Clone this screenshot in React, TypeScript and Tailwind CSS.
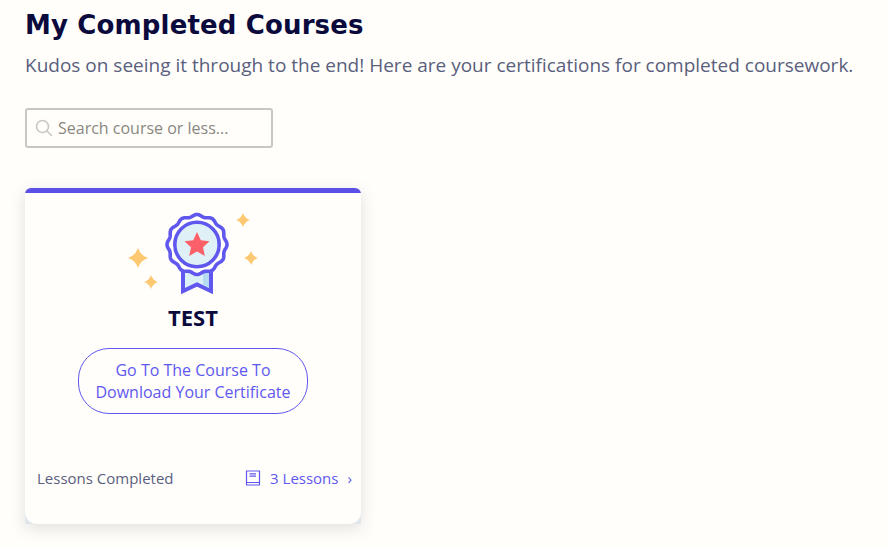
const scallop = (() => {
  const cx = 197, cy = 244.5, n = 12, R = 29, A = 1;
  let d = "";
  for (let i = 0; i <= 240; i++) {
    const t = (i / 240) * Math.PI * 2;
    const r = R + A * Math.cos(n * t);
    d += `${i ? "L" : "M"}${(cx + r * Math.sin(t)).toFixed(2)} ${(cy - r * Math.cos(t)).toFixed(2)}`;
  }
  return d + "Z";
})();

const sparkle = (x: number, y: number, r: number) =>
  `M${x} ${y - r}Q${x + r * 0.25} ${y - r * 0.25} ${x + r} ${y}Q${x + r * 0.25} ${y + r * 0.25} ${x} ${y + r}Q${x - r * 0.25} ${y + r * 0.25} ${x - r} ${y}Q${x - r * 0.25} ${y - r * 0.25} ${x} ${y - r}Z`;

function Badge() {
  return (
    <svg width="140" height="90" viewBox="125 207 140 90" className="block">
      <path d="M183 268V291L197 284.5L211 291V268Z" fill="#dcf0f8" stroke="#6058ee" strokeWidth="4" strokeLinejoin="miter" />
      <path d="M203 272H209V288L203 285Z" fill="#b5dcf2" />
      <path d={scallop} fill="#fffefb" stroke="#6058ee" strokeWidth="3.6" />
      <circle cx="197" cy="244.5" r="22.2" fill="#dff0f7" stroke="#6058ee" strokeWidth="3.6" />
      <path d="M197 232L200.8 240.2L209.5 241.2L203 247.2L204.8 256L197 251.4L189.2 256L191 247.2L184.5 241.2L193.2 240.2Z" fill="#fb6068" />
      <g fill="#fdc872">
        <path d={sparkle(138, 258, 10)} />
        <path d={sparkle(151, 282, 7)} />
        <path d={sparkle(243, 220, 7)} />
        <path d={sparkle(251, 258, 7)} />
      </g>
    </svg>
  );
}

export default function App() {
  return (
    <div className="min-h-[548px] bg-[#fffefb] pl-[25px] pt-[8px] font-['Open_Sans',sans-serif] overflow-hidden">
      <h1 className="font-['DejaVu_Sans',sans-serif] font-bold text-[26px] tracking-[0.15px] leading-[34px] text-[#0b0a3d]">My Completed Courses</h1>
      <p className="mt-[9px] text-[19px] leading-[28px] text-[#5a5f7d] whitespace-nowrap">Kudos on seeing it through to the end! Here are your certifications for completed coursework.</p>
      <div className="mt-[29px] flex h-[40px] w-[248px] items-center rounded-[3px] border-2 border-[#c8c7c3] pl-[8px]">
        <svg width="18" height="18" viewBox="0 0 18 18" fill="none" stroke="#c8c7c3" strokeWidth="1.6" className="shrink-0">
          <circle cx="7.5" cy="7.5" r="6" />
          <path d="M12 12L16.5 16.5" strokeLinecap="round" />
        </svg>
        <span className="ml-[5px] text-[16px] text-[#8a8780]">Search course or less...</span>
      </div>
      <div className="mt-[40px] h-[336px] w-[336px] rounded-t-[6px] border-t-[5px] border-[#5b50e6] bg-[#dfe7ec] shadow-[0_4px_16px_rgba(60,60,60,0.16)]">
        <div className="flex h-full flex-col rounded-b-[12px] bg-[#fffefb]">
          <div className="mt-[14px] flex justify-center pl-[4px]"><Badge /></div>
          <div className="mt-[5px] text-center text-[22px] leading-[30px] font-bold text-[#0b0a3d]">TEST</div>
          <div className="mt-[16px] flex justify-center">
            <div className="flex h-[66px] w-[230px] items-center justify-center rounded-[31px] border border-[#6058ee] text-center text-[16px] leading-[22px] text-[#6058ee]">
              <span>Go To The Course To<br />Download Your Certificate</span>
            </div>
          </div>
          <div className="mt-[54px] flex items-center justify-between pl-[12px] pr-[9px] text-[15px] leading-[20px]">
            <span className="text-[#5a5f7d]">Lessons Completed</span>
            <span className="flex items-center text-[#6058ee]">
              <svg width="16" height="16" viewBox="0 0 16 16" fill="none" stroke="#6058ee" strokeWidth="1.2">
                <path d="M1.5 1H14.5V15H1.5ZM1.5 12.5H14.5M4.5 3.8H11M4.5 6.2H11" />
              </svg>
              <span className="ml-[9px]">3 Lessons</span>
              <span className="ml-[9px]">›</span>
            </span>
          </div>
        </div>
      </div>
    </div>
  );
}
